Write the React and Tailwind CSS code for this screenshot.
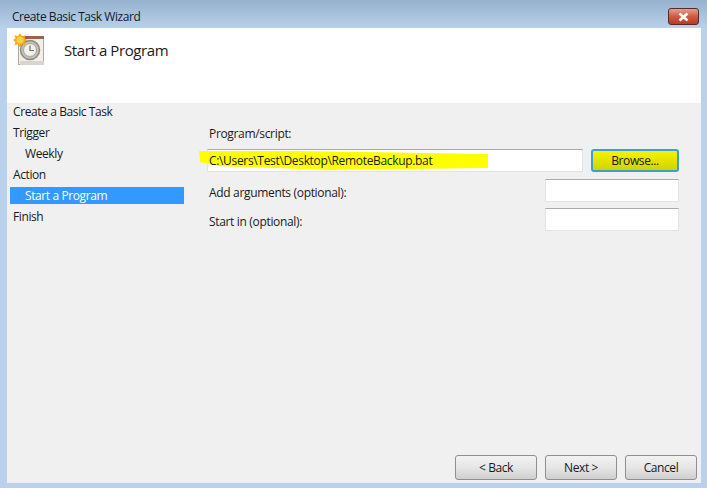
import React from 'react';

const steps = [
    { label: 'Create a Basic Task' },
    { label: 'Trigger' },
    { label: 'Weekly', sub: true },
    { label: 'Action' },
    { label: 'Start a Program', sub: true, active: true },
    { label: 'Finish' },
];

const TaskIcon = () => (
    <svg viewBox="0 0 36 36" className="w-[36px] h-[36px]">
        <rect x="5.5" y="3.5" width="25" height="28" fill="#f3eee8" stroke="#b5a79c" strokeWidth="1" />
        <rect x="5" y="3" width="26" height="3" fill="#97634c" />
        <rect x="7" y="28" width="24" height="4" fill="#d8d4d0" />
        <circle cx="17" cy="17" r="9.5" fill="#c9c0b0" stroke="#8d8a84" strokeWidth="1.5" />
        <circle cx="17" cy="17" r="6.5" fill="#eef2f4" stroke="#a8a69e" strokeWidth="1" />
        <path d="M17 12.5 V17.5 H21" fill="none" stroke="#8a6a4a" strokeWidth="1.2" />
        <path d="M7 0 L9 3.5 L12.5 2 L11.5 5.5 L15 7 L11.5 9 L12.5 12.5 L9 11 L7 14.5 L5 11 L1.5 12.5 L2.5 9 L0 7 L2.5 5.5 L1.5 2 L5 3.5 Z" fill="#f5a81c" />
        <circle cx="7" cy="7" r="3.5" fill="#ffd23c" />
    </svg>
);

const Field = ({ label, className }) => (
    <div className={`flex justify-between h-[23px] pl-[2px] ${className}`}>
        <span className="pt-[5px] leading-[17px]">{label}</span>
        <div className="w-[134px] h-[23px] bg-white border border-[#e2e3e4] border-t-[#ababab]"></div>
    </div>
);

const WizardButton = ({ children, className }) => (
    <button className={`h-[25px] rounded-[3px] border border-[#8e8f8f] bg-gradient-to-b from-[#f2f2f2] via-[#e6e6e6] to-[#cfcfcf] text-[12px] text-[#1a1a1a] ${className}`}>
        {children}
    </button>
);

export default function App() {
    return (
        <div className="w-[707px] h-[488px] overflow-hidden flex flex-col bg-[#b9d1ea] text-[12px] text-[#1a1a1a] font-['Open_Sans',sans-serif] tracking-[-0.4px]">
            {/* Title bar */}
            <div className="h-[28px] shrink-0 flex items-start justify-between pl-[12px] pr-[8px] bg-gradient-to-b from-[#96b2cf] to-[#b9d1ea]">
                <span className="mt-[8px] leading-[17px] tracking-[-0.45px] text-[#101c28]">Create Basic Task Wizard</span>
                <div className="mt-[8px] w-[31px] h-[17px] rounded-[3px] border border-[#5a2a24] bg-gradient-to-b from-[#e0a090] via-[#cf5a42] to-[#b8392a] flex items-center justify-center">
                    <svg viewBox="0 0 12 10" className="w-[13px] h-[10px]">
                        <path d="M2 1.5 L10 8.5 M10 1.5 L2 8.5" stroke="#ffffff" strokeWidth="2.6" />
                    </svg>
                </div>
            </div>

            {/* Client area */}
            <div className="flex-1 ml-[7px] mr-[6px] mb-[5px] flex flex-col bg-[#f0f0f0]">
                <div className="h-[75px] shrink-0 bg-white flex items-start pl-[6px] pt-[5px]">
                    <TaskIcon />
                    <span className="ml-[15px] mt-[7px] text-[15px] leading-[20px] tracking-[-0.4px] text-[#1a1a1a]">Start a Program</span>
                </div>

                <div className="flex-1 flex min-h-0">
                    {/* Step list */}
                    <div className="w-[177px] shrink-0 pl-[3px] -mt-[2px]">
                        {steps.map((step) => (
                            <div
                                key={step.label}
                                className={`flex items-center ${step.active ? 'h-[17px] my-[2px] bg-[#3399ff] text-white' : 'h-[21px]'} ${step.sub ? 'pl-[15px]' : 'pl-[3px]'}`}
                            >
                                {step.label}
                            </div>
                        ))}
                    </div>

                    {/* Form */}
                    <div className="flex-1 flex flex-col pl-[23px] pr-[22px] pt-[22px] tracking-[-0.33px]">
                        <div className="h-[17px] leading-[17px] pl-[2px]">Program/script:</div>
                        <div className="mt-[7px] flex items-center justify-between">
                            <div className="relative w-[376px] h-[23px] bg-white border border-[#e2e3e4] border-t-[#ababab] flex items-center pl-[1px]">
                                <svg viewBox="0 0 292 23" preserveAspectRatio="none" className="absolute left-[-10px] top-[-1px] w-[292px] h-[23px]">
                                    <path d="M1 2 L100 2 L290 5 L290 19 L130 21 L20 17 L2 13 Z" fill="#ffff00" />
                                </svg>
                                <span className="relative">C:\Users\Test\Desktop\RemoteBackup.bat</span>
                            </div>
                            <button className="w-[88px] h-[23px] rounded-[3px] border-2 border-[#3c9fcf] bg-gradient-to-b from-[#f4f400] to-[#d2d200] text-[12px] tracking-[-0.4px] text-[#1a1a1a]">
                                Browse...
                            </button>
                        </div>
                        <Field label="Add arguments (optional):" className="mt-[7px]" />
                        <Field label="Start in (optional):" className="mt-[6px]" />
                        <div className="flex-1"></div>
                    </div>
                </div>

                {/* Footer buttons */}
                <div className="shrink-0 flex justify-end pr-[4px] pb-[3px] gap-[8px]">
                    <WizardButton className="w-[82px]">&lt; Back</WizardButton>
                    <WizardButton className="w-[72px]">Next &gt;</WizardButton>
                    <WizardButton className="w-[72px]">Cancel</WizardButton>
                </div>
            </div>
        </div>
    );
}
